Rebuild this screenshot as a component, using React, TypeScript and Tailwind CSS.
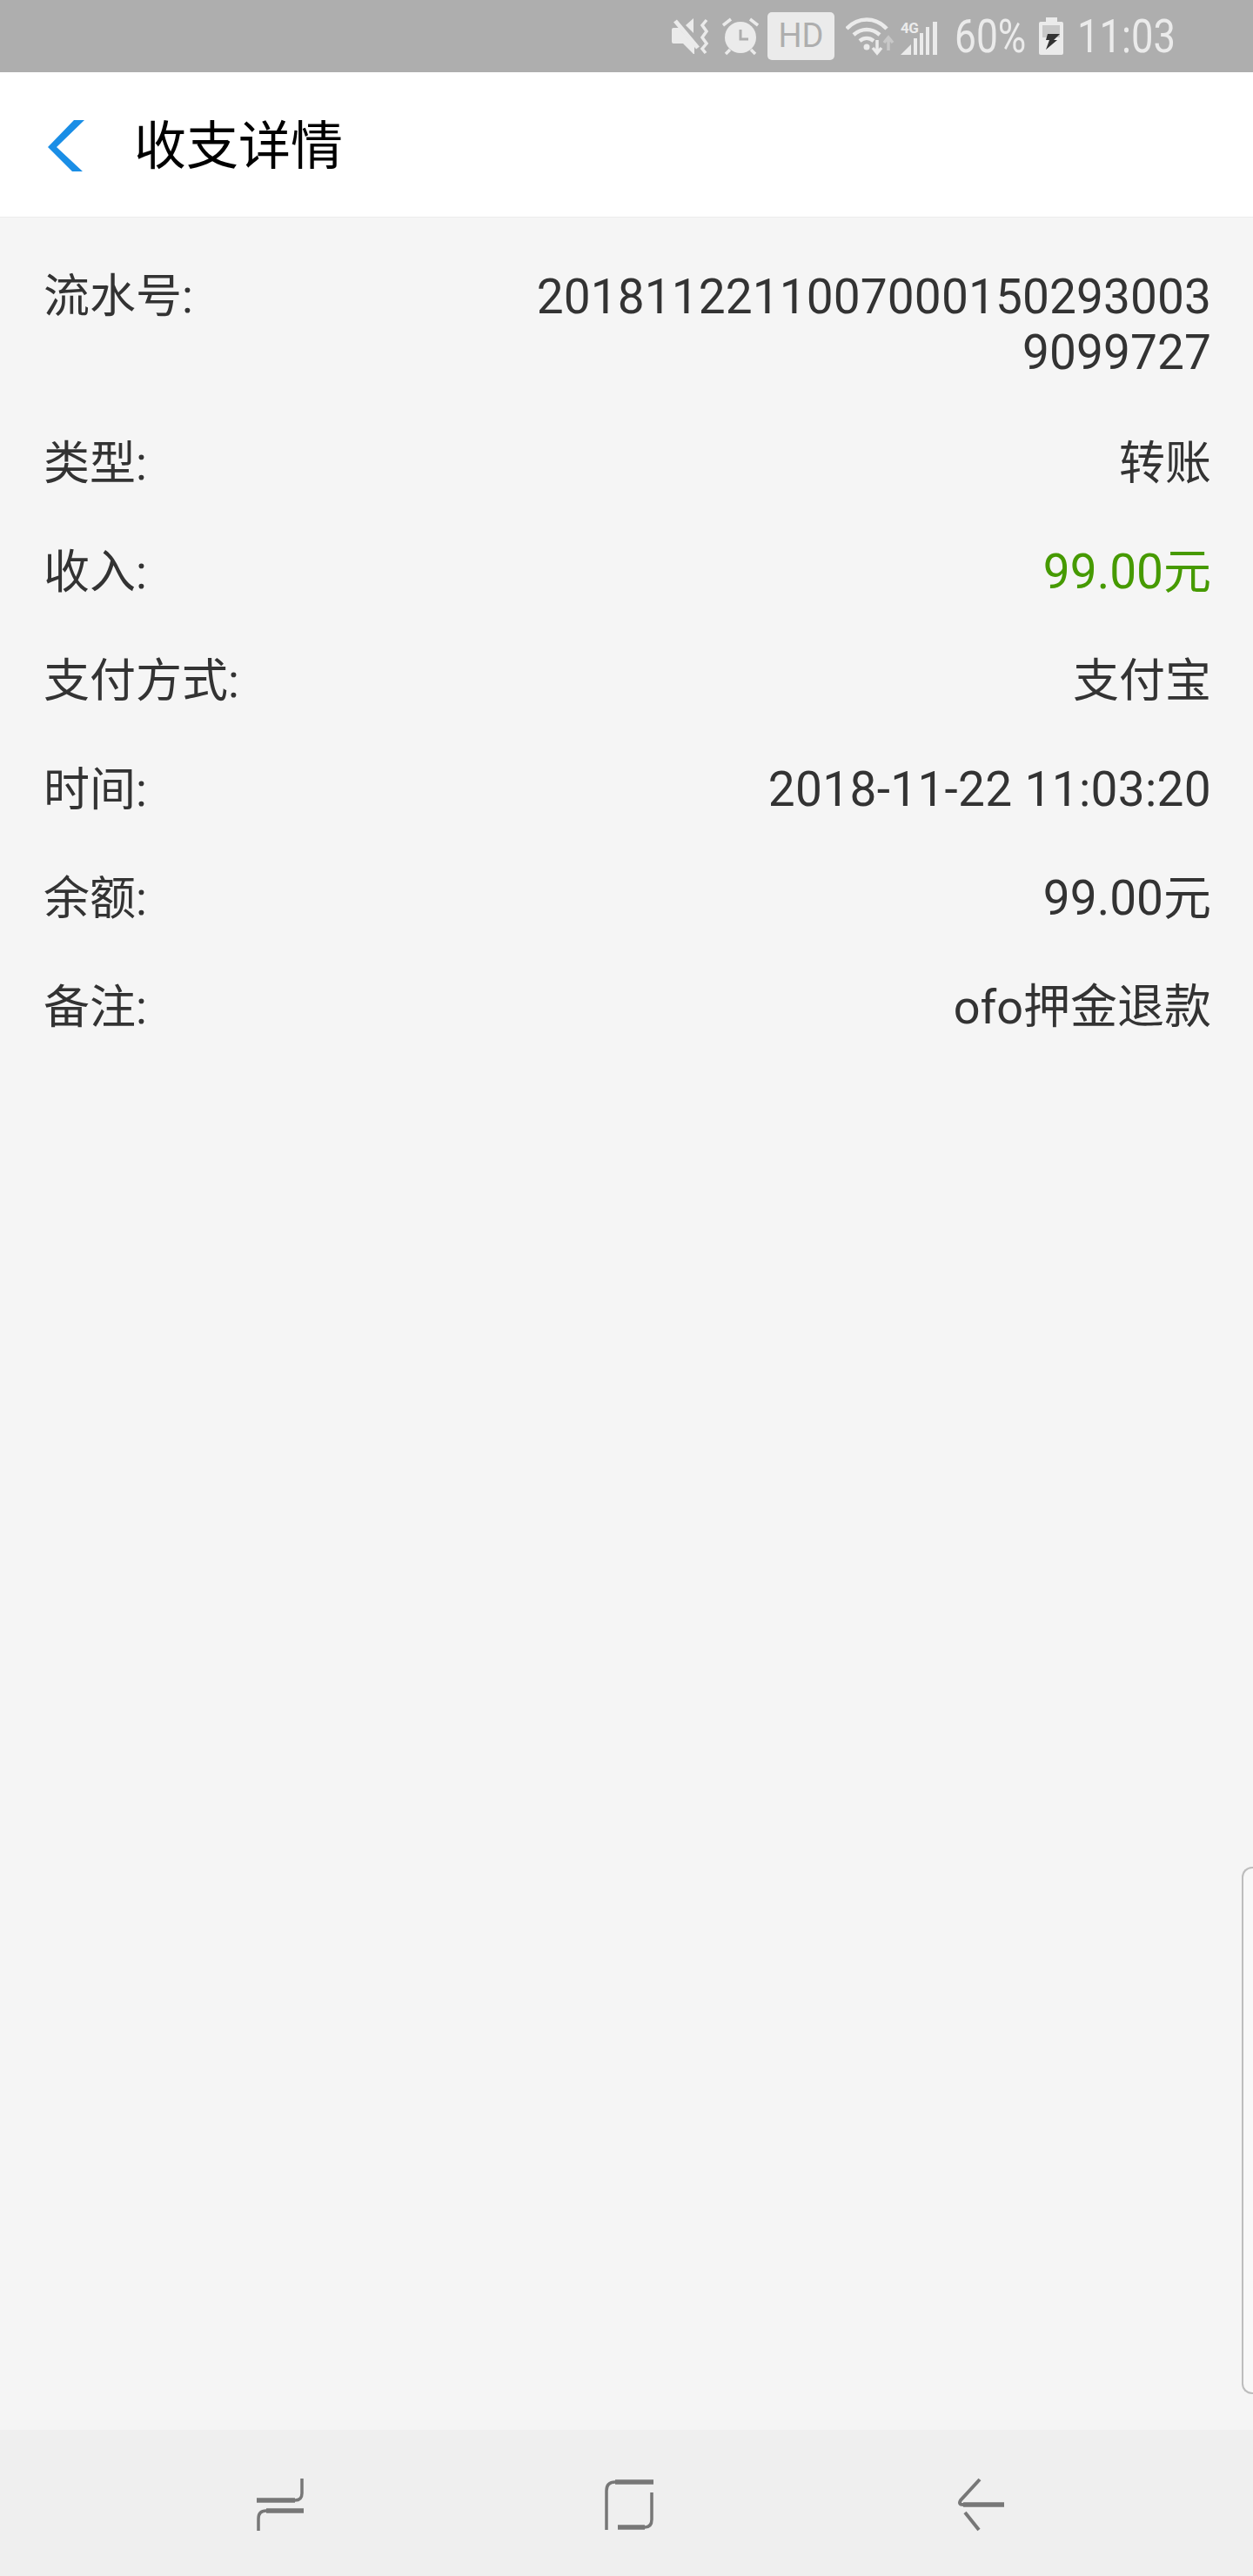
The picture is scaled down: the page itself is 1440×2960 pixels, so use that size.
const font = "font-['Roboto','Noto_Sans_CJK_SC',sans-serif]"

const rows = [
  { label: "类型:", value: "转账", valueClass: "text-[53px] text-[#333]" },
  { label: "收入:", value: "99.00元", valueClass: "text-[55px] text-[#469a00] -mt-[1px]" },
  { label: "支付方式:", value: "支付宝", valueClass: "text-[53px] text-[#333]" },
  { label: "时间:", value: "2018-11-22 11:03:20", valueClass: "text-[55px] text-[#333] tracking-[0.3px] -mt-[2px]" },
  { label: "余额:", value: "99.00元", valueClass: "text-[55px] text-[#333] -mt-[1px]" },
  { label: "备注:", value: "ofo押金退款", valueClass: "text-[54px] text-[#333]" },
]

const StatusBar = () => (
  <div className="h-[83px] bg-[#aeaeae] flex items-center pl-[772px] text-[#ebebeb] font-['Roboto',sans-serif]">
    <svg width="43" height="42" viewBox="0 0 43 42" fill="#ebebeb" className="mt-[1px]">
      <path d="M0 13q0-2 2-2h6l18 21v9l-1 0-12-12H2q-2 0-2-2z" />
      <path d="M25 0v17L16 8z" />
      <path d="M4 3l26 31" stroke="#ebebeb" strokeWidth="5" />
      <path d="M40 2l-5 6 5 7-5 7 5 7-5 6 4 5" fill="none" stroke="#ebebeb" strokeWidth="3.5" />
    </svg>
    <svg width="42" height="44" viewBox="0 0 42 44" fill="none" className="ml-[15px]">
      <circle cx="21" cy="23" r="18" fill="#ebebeb" />
      <path d="M21 14v11h9" stroke="#aeaeae" strokeWidth="3" />
      <path d="M1 9l9-7M41 9l-9-7M4 42l5-5M38 42l-5-5" stroke="#ebebeb" strokeWidth="3.5" />
    </svg>
    <div className="ml-[10px] w-[77px] h-[55px] -mt-[1px] rounded-[5px] bg-[#ebebeb] flex items-center justify-center text-[38px] font-normal text-[#aeaeae]">
      HD
    </div>
    <svg width="56" height="44" viewBox="0 0 56 44" fill="none" className="ml-[13px]">
      <path d="M1 13C14 -1 34 -1 47 13" stroke="#ebebeb" strokeWidth="4.5" />
      <path d="M9 20c9-8 21-8 30 0" stroke="#ebebeb" strokeWidth="4.5" />
      <path d="M16 27c5-4 11-4 16 0" stroke="#ebebeb" strokeWidth="4.5" />
      <circle cx="24" cy="34" r="3.5" fill="#ebebeb" />
      <path d="M36 26v14M31 35l5 6 5-6" stroke="#ebebeb" strokeWidth="3.5" />
      <path d="M49 38V24M44 29l5-6 5 6" stroke="#c8c8c8" strokeWidth="3.5" />
    </svg>
    <div className="relative ml-[7px] w-[42px] h-[38px] mt-[4px]">
      <span className="absolute left-0 -top-[2px] text-[17px] leading-[18px] font-bold tracking-[-0.5px]">4G</span>
      <svg width="42" height="38" viewBox="0 0 42 38" fill="#ebebeb">
        <path d="M0 38l12-12v12z" />
        <rect x="15" y="19" width="4" height="19" />
        <rect x="22" y="13" width="4" height="25" />
        <rect x="29" y="6" width="4" height="32" />
        <rect x="37" y="0" width="5" height="38" />
      </svg>
    </div>
    <div className="ml-[20px] w-[80px] mt-[1px]">
      <span className="block origin-left scale-x-[0.82] text-[54px] leading-none font-normal whitespace-nowrap">60%</span>
    </div>
    <svg width="28" height="43" viewBox="0 0 28 43" className="ml-[17px]">
      <path d="M8 0h13v5h5q2 0 2 2v34q0 2-2 2H2q-2 0-2-2V7q0-2 2-2h6z" fill="#ebebeb" />
      <rect x="4" y="9" width="20" height="14" fill="#c8c8c8" />
      <path d="M10 19h14l-7 7h4L8 37l4-11H8z" fill="#333" />
    </svg>
    <div className="ml-[16px] w-[112px] mt-[1px]">
      <span className="block origin-left scale-x-[0.84] text-[54px] leading-none font-normal whitespace-nowrap">11:03</span>
    </div>
  </div>
)

const NavBar = () => (
  <div className="h-[168px] bg-[#efefef] flex items-center">
    <svg width="60" height="66" viewBox="0 0 60 66" fill="none" className="ml-[292px] mt-[4px]">
      <path d="M55 3v17q0 8-8 8" stroke="#777" strokeWidth="3.5" />
      <path d="M47 28H3" stroke="#777" strokeWidth="5.5" />
      <path d="M14 40q-9 0-9 9v14" stroke="#777" strokeWidth="3.5" />
      <path d="M14 40H57" stroke="#777" strokeWidth="5.5" />
    </svg>
    <svg width="60" height="66" viewBox="0 0 60 66" fill="none" className="ml-[341px] mt-[4px]">
      <path d="M14 7q-10 0-10 10v45" stroke="#777" strokeWidth="3.5" />
      <path d="M14 7H58" stroke="#777" strokeWidth="5.5" />
      <path d="M56 19v31q0 9-8 9" stroke="#777" strokeWidth="3.5" />
      <path d="M48 59H17" stroke="#777" strokeWidth="5.5" />
    </svg>
    <svg width="60" height="66" viewBox="0 0 60 66" fill="none" className="ml-[344px] mt-[4px]">
      <path d="M29 4L7 28q-3 5 3 5" stroke="#777" strokeWidth="4" />
      <path d="M10 33H57" stroke="#777" strokeWidth="5.5" />
      <path d="M12 42l16 20" stroke="#777" strokeWidth="4" />
    </svg>
  </div>
)

const App = () => {
  return (
    <div className={`w-[1440px] h-[2960px] flex flex-col bg-[#f5f5f5] ${font}`}>
      <StatusBar />
      <div className="h-[167px] bg-white border-b border-[#ececec] flex items-center">
        <svg width="42" height="59" viewBox="0 0 42 59" fill="#1a8ee6" className="ml-[55px] mt-[2px]">
          <path d="M30 0h12L10 31l30 28H28L0 31z" />
        </svg>
        <h1 className="ml-[57px] mt-[6px] text-[60px] leading-none text-black font-normal">收支详情</h1>
      </div>
      <div className="flex-1 relative pt-[59px] pl-[50px] pr-[48px]">
        <div className="flex justify-between pb-[33px]">
          <span className="text-[53px] leading-[64px] text-[#333]">流水号:</span>
          <span className="w-[790px] text-right break-all text-[55px] leading-[64px] tracking-[0.1px] text-[#333]">
            20181122110070001502930039099727
          </span>
        </div>
        <div className="flex flex-col">
          {rows.map((row) => (
            <div key={row.label} className="flex justify-between h-[125px] items-center">
              <span className="text-[53px] leading-[64px] text-[#333]">{row.label}</span>
              <span className={`leading-[64px] ${row.valueClass}`}>{row.value}</span>
            </div>
          ))}
        </div>
        <div className="absolute right-0 top-[1895px] w-[13px] h-[606px] rounded-l-[12px] border-l-2 border-y-2 border-[#bdbdbd] bg-[#f8f8f8]" />
      </div>
      <NavBar />
    </div>
  )
}

export default App
